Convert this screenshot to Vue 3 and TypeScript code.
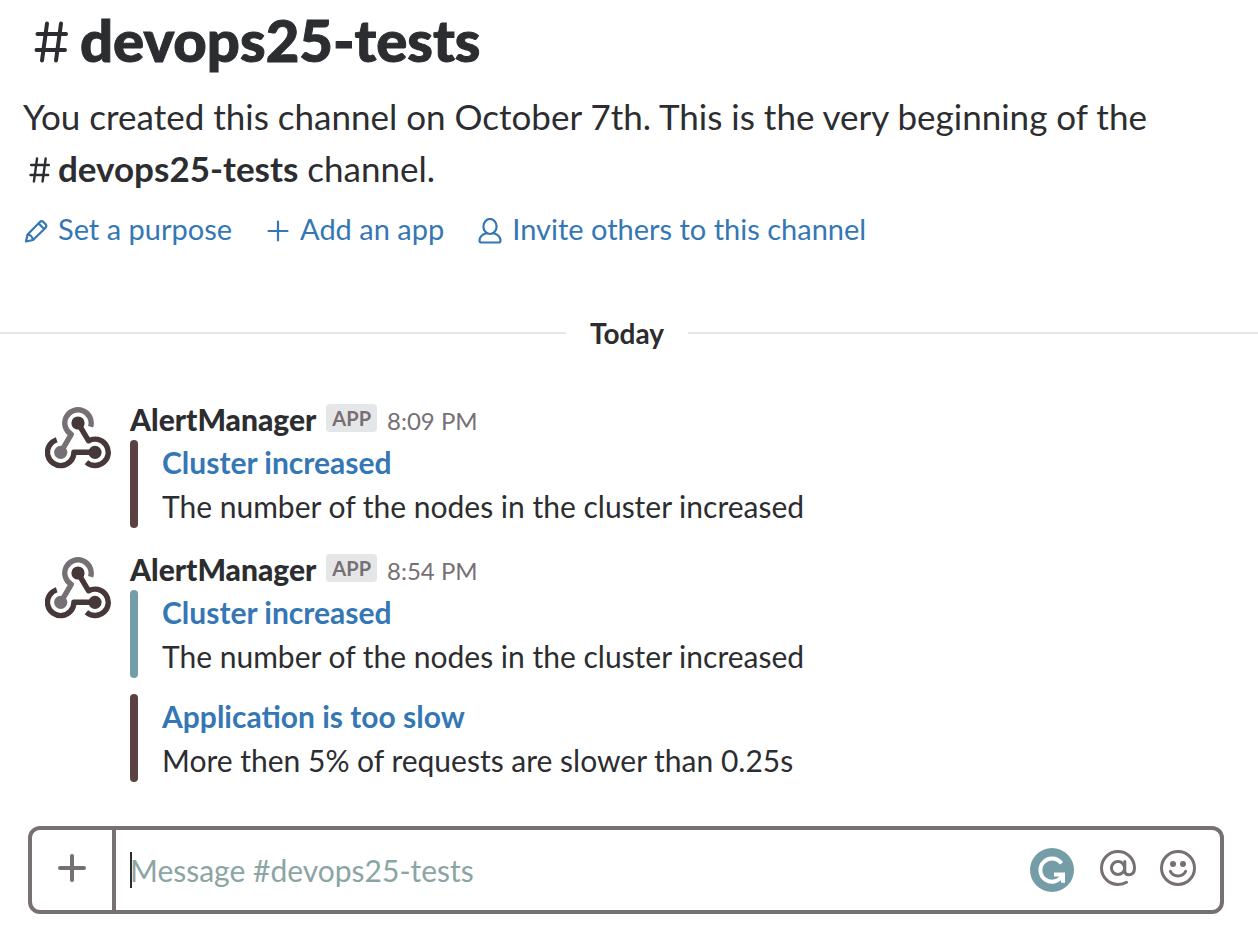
<script setup lang="ts">
import { ref } from 'vue'

interface Attachment {
  title: string
  text: string
  tone: 'danger' | 'good'
}

interface Message {
  id: number
  author: string
  time: string
  attachments: Attachment[]
}

const channel = 'devops25-tests'
const draft = ref('')

const messages: Message[] = [
  {
    id: 1,
    author: 'AlertManager',
    time: '8:09 PM',
    attachments: [
      { title: 'Cluster increased', text: 'The number of the nodes in the cluster increased', tone: 'danger' },
    ],
  },
  {
    id: 2,
    author: 'AlertManager',
    time: '8:54 PM',
    attachments: [
      { title: 'Cluster increased', text: 'The number of the nodes in the cluster increased', tone: 'good' },
      { title: 'Application is too slow', text: 'More then 5% of requests are slower than 0.25s', tone: 'danger' },
    ],
  },
]
</script>

<template>
  <main class="channel">
    <header class="intro">
      <h1 class="title">
        <svg class="hash" viewBox="0 0 34 42" aria-hidden="true">
          <path d="M13 2.5 8 39.5M27 2.5 22 39.5M3.5 13H32M2.5 29H31" />
        </svg>
        <span>{{ channel }}</span>
      </h1>
      <p class="about">
        You created this channel on October 7th. This is the very beginning of the
        <strong class="name"><svg class="hash small" viewBox="0 0 34 42" aria-hidden="true">
          <path d="M13 2.5 8 39.5M27 2.5 22 39.5M3.5 13H32M2.5 29H31" />
        </svg>{{ channel }}</strong> channel.
      </p>
      <nav class="actions">
        <a href="#purpose">
          <svg class="icon" viewBox="0 0 24 24" aria-hidden="true">
            <path d="M2 22.5 3.6 15.5 15.6 3.2Q17.6 1.2 19.6 3.2L21.4 5Q23.2 7 21.4 9L9 21ZM3.6 15.5Q8 16 9 21M14.6 4.4 20.2 10" />
          </svg>
          Set a purpose
        </a>
        <a href="#app">
          <svg class="icon" viewBox="0 0 24 24" aria-hidden="true"><path d="M12 2.5V21.5M2.5 12H21.5" /></svg>
          Add an app
        </a>
        <a href="#invite">
          <svg class="icon" viewBox="0 0 24 26" aria-hidden="true">
            <ellipse cx="12" cy="8.5" rx="6.6" ry="7.5" />
            <path d="M8.5 15.2C4 16.5 1.5 18.5 1.5 22.5Q1.5 24.5 3.5 24.5H20.5Q22.5 24.5 22.5 22.5C22.5 18.5 20 16.5 15.5 15.2" />
          </svg>
          Invite others to this channel
        </a>
      </nav>
    </header>

    <div class="divider"><span>Today</span></div>

    <section class="messages" aria-label="Messages">
      <article v-for="message in messages" :key="message.id" class="message">
        <svg class="avatar" viewBox="0 0 66 62" aria-hidden="true">
          <g class="light">
            <path d="M45.6 19.8A13.2 13.2 0 1 0 26.2 27.3L15.7 45.3" />
            <circle cx="15.7" cy="45.3" r="6.6" />
          </g>
          <g class="dark">
            <path d="M33 16 43.6 33.8A13.2 13.2 0 1 1 41.4 55.3" />
            <circle cx="33" cy="16" r="6.6" />
            <path d="M11.7 32.8A13.2 13.2 0 1 0 28.9 45.3H50" />
            <circle cx="50" cy="45.3" r="6.6" />
          </g>
        </svg>
        <div class="body">
          <div class="meta">
            <span class="author">{{ message.author }}</span>
            <span class="badge">APP</span>
            <time>{{ message.time }}</time>
          </div>
          <div class="attachments">
            <div v-for="(item, i) in message.attachments" :key="i" class="attachment" :class="item.tone">
              <a class="heading" href="#alert">{{ item.title }}</a>
              <p>{{ item.text }}</p>
            </div>
          </div>
        </div>
      </article>
    </section>

    <form class="composer" @submit.prevent>
      <button type="button" class="add" aria-label="Add a file">
        <svg viewBox="0 0 28 28" aria-hidden="true"><path d="M14 2V26M2 14H26" /></svg>
      </button>
      <div class="field">
        <span class="caret" aria-hidden="true"></span>
        <input v-model="draft" type="text" :placeholder="`Message #${channel}`" :aria-label="`Message #${channel}`" />
      </div>
      <div class="tools">
        <button type="button" class="grammar" aria-label="Check grammar">
          <svg viewBox="0 0 44 44" aria-hidden="true">
            <circle cx="22" cy="22" r="22" />
            <path d="M31.5 15.4A11.6 11.6 0 1 0 32.5 27" />
            <path d="M24 26.6H33V34.8" />
          </svg>
        </button>
        <button type="button" aria-label="Mention someone">
          <svg viewBox="0 0 36 36" aria-hidden="true">
            <circle cx="18" cy="18" r="6.6" />
            <path d="M24.8 11.4V20.5Q24.8 24.8 28.6 24.8Q34.5 24.8 34.5 18A16.5 16.5 0 1 0 18 34.5Q23 34.5 26.5 32.3" />
          </svg>
        </button>
        <button type="button" aria-label="Insert emoji">
          <svg viewBox="0 0 36 36" aria-hidden="true">
            <circle cx="18" cy="18" r="16.5" />
            <path d="M10.4 21.4Q12.6 26 18 26Q23.4 26 25.6 21.4" />
            <circle class="eye" cx="13" cy="14" r="3" />
            <circle class="eye" cx="23" cy="14" r="3" />
          </svg>
        </button>
      </div>
    </form>
  </main>
</template>

<style>
body {
  margin: 0;
  background: #fff;
}
</style>

<style scoped>
.channel {
  font-family: Lato, "Liberation Sans", sans-serif;
  font-size: 30px;
  line-height: 44px;
  color: #2c2d30;
}

h1,
p {
  margin: 0;
}

a {
  color: #3577b5;
  text-decoration: none;
}

svg {
  display: block;
  flex: none;
  fill: none;
  stroke: currentColor;
  stroke-linecap: round;
  stroke-linejoin: round;
}

.intro {
  padding: 2px 24px 0 23px;
}

.title {
  display: flex;
  align-items: center;
  gap: 12px;
  padding-left: 11px;
  font-size: 58px;
  line-height: 76px;
  font-weight: 900;
  -webkit-text-stroke: 1px currentColor;
}

.hash {
  width: 34px;
  height: 42px;
  margin-top: 4px;
  stroke-width: 4;
}

.hash.small {
  display: inline-block;
  width: 21px;
  height: 26px;
  margin: 0 8px 0 6px;
  vertical-align: -1px;
}

.about {
  margin-top: 12px;
  font-size: 35px;
  line-height: 52px;
}

.name {
  font-weight: 700;
  white-space: nowrap;
}

.actions {
  display: flex;
  flex-wrap: wrap;
  gap: 0 34px;
  margin-top: 13px;
  padding-left: 1px;
  font-size: 29px;
}

.actions a {
  display: flex;
  align-items: center;
  gap: 10px;
}

.icon {
  width: 24px;
  height: 26px;
  margin-top: 4px;
  stroke-width: 2.2;
}

.divider {
  display: flex;
  align-items: center;
  gap: 24px;
  margin: 60px 0 0 -4px;
  font-size: 28px;
  font-weight: 700;
}

.divider::before,
.divider::after {
  content: "";
  flex: 1;
  height: 2px;
  background: #e5e5e5;
}

.messages {
  display: flex;
  flex-direction: column;
  gap: 20px;
  margin-top: 43px;
  padding: 0 24px 0 45px;
}

.message {
  display: flex;
  gap: 19px;
}

.avatar {
  width: 66px;
  height: 62px;
  margin-top: 9px;
  stroke-width: 5.4;
  stroke-linecap: butt;
}

.light {
  color: #766f74;
}

.dark {
  color: #463739;
}

.avatar circle {
  fill: currentColor;
  stroke: none;
}

.body {
  flex: 1;
}

.meta {
  display: flex;
  align-items: flex-start;
  height: 42px;
  line-height: 42px;
}

.author {
  font-weight: 900;
}

.badge {
  margin: 6px 10px 0 10px;
  padding: 0 6px;
  border-radius: 4px;
  background: #e5e6e7;
  color: #766f74;
  font-size: 20px;
  line-height: 28px;
  font-weight: 700;
}

time {
  color: #766f74;
  font-size: 24px;
  line-height: 46px;
}

.attachments {
  display: flex;
  flex-direction: column;
  gap: 16px;
}

.attachment {
  position: relative;
  padding-left: 32px;
}

.attachment::before {
  content: "";
  position: absolute;
  inset: 0 auto 0 0;
  width: 8px;
  border-radius: 4px;
  background: #5c4142;
}

.attachment.good::before {
  background: #759da8;
}

.heading {
  font-weight: 700;
}

.composer {
  display: flex;
  box-sizing: border-box;
  height: 88px;
  margin: 44px 34px 26px 28px;
  border: 4px solid #766f74;
  border-radius: 12px;
}

button {
  display: flex;
  align-items: center;
  justify-content: center;
  padding: 0 0 4px;
  border: 0;
  background: none;
  color: #766f74;
}

.add {
  width: 84px;
  border-right: 4px solid #766f74;
}

.add svg {
  width: 28px;
  height: 28px;
  stroke-width: 4;
}

.field {
  position: relative;
  display: flex;
  flex: 1;
  padding-left: 14px;
}

.caret {
  position: absolute;
  top: 22px;
  left: 14px;
  width: 2px;
  height: 36px;
  background: #2c2d30;
}

input {
  flex: 1;
  min-width: 0;
  padding: 0;
  border: 0;
  outline: 0;
  background: none;
  color: inherit;
  font: inherit;
}

input::placeholder {
  color: #8ba5a4;
  opacity: 1;
}

.tools {
  display: flex;
  align-items: center;
  gap: 24px;
  padding-right: 24px;
}

.tools svg {
  width: 36px;
  height: 36px;
  stroke-width: 3;
}

.tools .grammar {
  margin-right: 2px;
  padding: 0;
}

.tools .grammar svg {
  width: 44px;
  height: 44px;
  color: #fff;
  stroke-width: 4;
  stroke-linecap: butt;
  stroke-linejoin: miter;
}

.grammar circle {
  fill: #759da8;
  stroke: none;
}

.tools .eye {
  fill: currentColor;
  stroke: none;
}
</style>
